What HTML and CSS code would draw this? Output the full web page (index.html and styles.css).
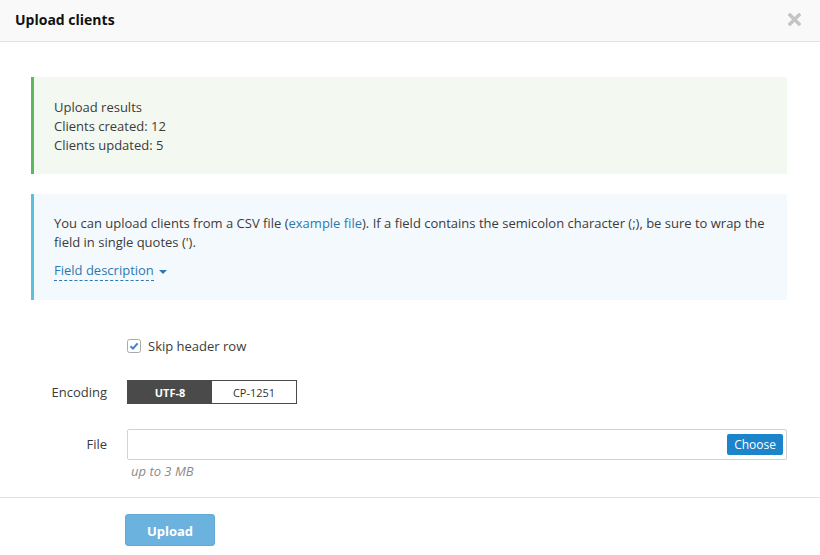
FILE: index.html
```html
<!DOCTYPE html>
<html>
<head>
<meta charset="utf-8">
<link rel="stylesheet" href="styles.css">
</head>
<body>
<div class="modal">
  <div class="modal-header">
    <span class="title">Upload clients</span>
    <span class="close"><svg width="13" height="13" viewBox="0 0 13 13"><path d="M2 2 L11 11 M11 2 L2 11" stroke="#c4c4c4" stroke-width="3.4" stroke-linecap="square"/></svg></span>
  </div>
  <div class="modal-body">
    <div class="alert alert-success">
      <div>Upload results</div>
      <div>Clients created: 12</div>
      <div>Clients updated: 5</div>
    </div>
    <div class="alert alert-info">
      <div>You can upload clients from a CSV file (<a class="link">example file</a>). If a field contains the semicolon character (;), be sure to wrap the field in single quotes (').</div>
      <div class="field-desc"><span class="dashed">Field description</span><span class="caret"></span></div>
    </div>
    <div class="form">
      <div class="label"></div>
      <div class="control check-row">
        <span class="checkbox"><svg width="14" height="14" viewBox="0 0 14 14"><rect x="0.5" y="0.5" width="13" height="13" rx="2" fill="#fff" stroke="#a9a9a9"/><path d="M3.5 7.2 L6 9.6 L10.6 4.3" fill="none" stroke="#3b82d4" stroke-width="2"/></svg></span>
        <span>Skip header row</span>
      </div>
      <div class="label enc-label">Encoding</div>
      <div class="control">
        <div class="btn-group">
          <span class="seg active">UTF-8</span>
          <span class="seg">CP-1251</span>
        </div>
      </div>
      <div class="label file-label">File</div>
      <div class="control">
        <div class="file-input"><span class="choose">Choose</span></div>
        <div class="help">up to 3 MB</div>
      </div>
    </div>
  </div>
  <div class="modal-footer">
    <span class="upload">Upload</span>
  </div>
</div>
</body>
</html>
```
FILE: styles.css
```css
html, body { margin: 0; padding: 0; background: #fff; }
body { font-family: "Open Sans", "DejaVu Sans", sans-serif; font-size: 13px; color: #3b3b3b; }
.modal { width: 820px; }
.modal-header {
  height: 41px; background: #f9f9f9; border-bottom: 1px solid #e3e3e3;
  display: flex; align-items: center; justify-content: space-between;
  padding: 0 19px 0 15px;
}
.title { font-weight: 700; font-size: 14px; color: #111; margin-top: -2px; }
.close { display: flex; margin-top: -2px; }
.modal-body { padding: 35px 33px 0 31px; }
.alert { line-height: 19px; padding: 21px 20px 19px 20px; border-left: 3px solid; }
.alert-success { background: #f3f8f1; border-left-color: #5cb85c; }
.alert-info { background: #f4f9fd; border-left-color: #5bc0de; margin-top: 20px; padding: 20px 20px 19px 20px; }
.link { color: #2c79b1; text-decoration: none; }
.field-desc { margin-top: 9px; color: #2c79b1; display: flex; align-items: center; }
.dashed { display: inline-block; line-height: 19px; border-bottom: 1px dashed #2c79b1; }
.caret { display: inline-block; width: 0; height: 0; border-left: 4px solid transparent; border-right: 4px solid transparent; border-top: 4px solid #2c79b1; margin-left: 5px; margin-top: 2px; }
.form { display: grid; grid-template-columns: 96px 1fr; margin-top: 36px; }
.label { padding-right: 20px; text-align: right; }
.check-row { display: flex; align-items: center; height: 20px; gap: 7px; }
.checkbox { display: flex; }
.enc-label { margin-top: 24px; line-height: 24px; }
.control:nth-child(4) { margin-top: 24px; }
.btn-group { display: flex; height: 24px; width: 170px; border: 1px solid #4a4a4a; box-sizing: border-box; }
.seg { flex: 1; display: flex; align-items: center; justify-content: center; font-size: 11px; color: #333; }
.seg.active { background: #4a4a4a; color: #fff; font-weight: 700; }
.file-label { margin-top: 25px; line-height: 31px; }
.control:nth-child(6) { margin-top: 25px; }
.file-input { height: 31px; box-sizing: border-box; border: 1px solid #d3d3d3; border-radius: 2px; display: flex; align-items: center; justify-content: flex-end; padding-right: 3px; }
.choose { background: #1c84ca; color: #fff; font-size: 12px; height: 21px; line-height: 21px; padding: 0 7px; border-radius: 2px; }
.help { color: #8a8a8a; font-style: italic; font-size: 13px; line-height: 19px; margin-top: 2px; padding-left: 4px; }
.modal-footer { border-top: 1px solid #e3e3e3; margin-top: 16px; padding: 16px 0 0 125px; }
.upload { display: inline-block; width: 90px; height: 32px; line-height: 32px; text-align: center; background: #6cb2df; color: #fff; font-weight: 700; border-radius: 3px; border: 1px solid #63a9d8; box-sizing: border-box; }
```
